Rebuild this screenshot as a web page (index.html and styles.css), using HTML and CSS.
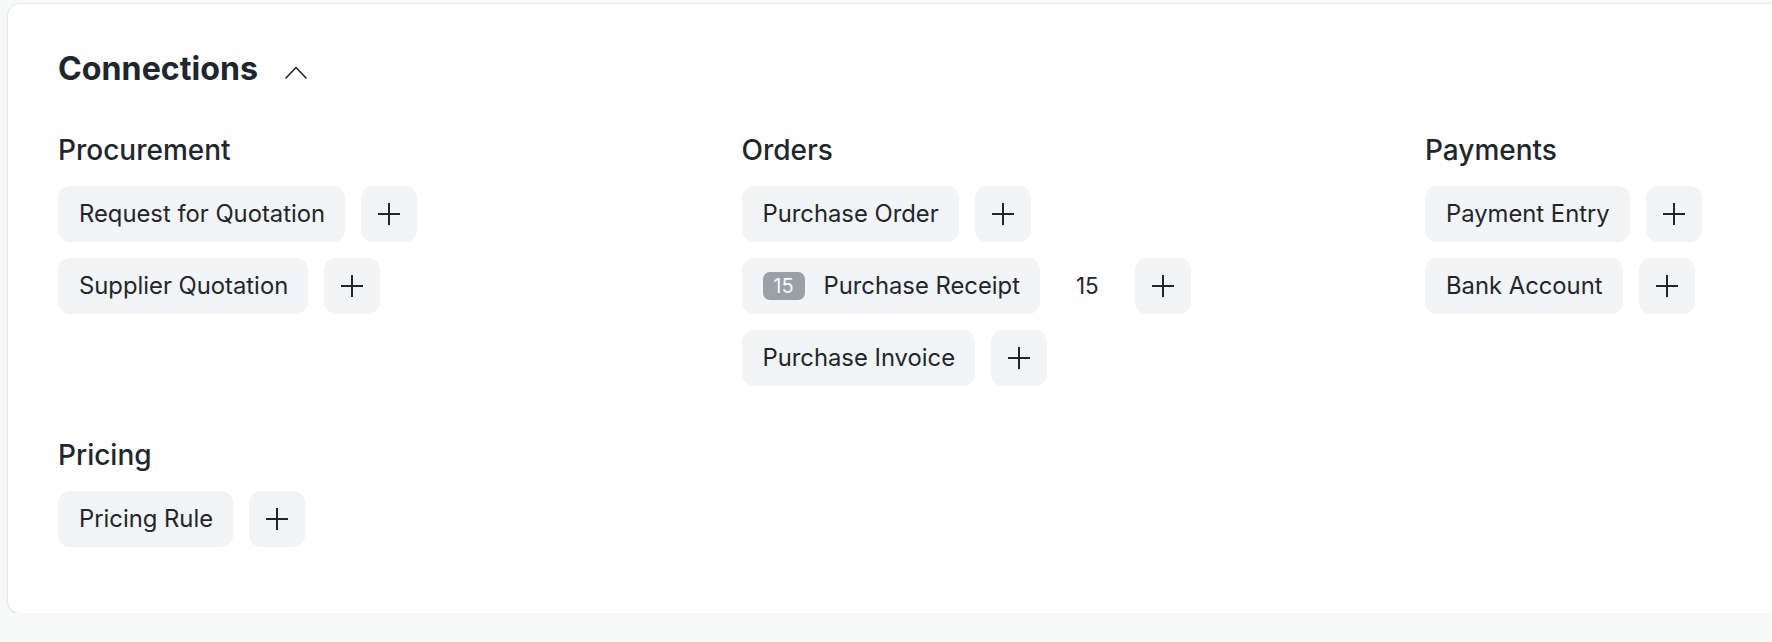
FILE: index.html
```html
<!DOCTYPE html>
<html>
<head>
<meta charset="utf-8">
<link rel="stylesheet" href="styles.css">
</head>
<body>
<div class="card">
  <div class="card-head">
    <h2 class="title">Connections</h2>
    <svg class="chevron" width="22" height="13" viewBox="0 0 22 13"><polyline points="1,12 11,1.5 21,12" fill="none" stroke="#1f272e" stroke-width="1.6" stroke-linejoin="round" stroke-linecap="round"/></svg>
  </div>
  <div class="groups">
    <div class="group">
      <div class="group-title">Procurement</div>
      <div class="links">
        <div class="link-row"><span class="chip">Request for Quotation</span><span class="add"><svg width="22" height="22" viewBox="0 0 22 22"><path d="M11 0V22M0 11H22" stroke="#1f272e" stroke-width="2"/></svg></span></div>
        <div class="link-row"><span class="chip">Supplier Quotation</span><span class="add"><svg width="22" height="22" viewBox="0 0 22 22"><path d="M11 0V22M0 11H22" stroke="#1f272e" stroke-width="2"/></svg></span></div>
      </div>
    </div>
    <div class="group">
      <div class="group-title">Orders</div>
      <div class="links">
        <div class="link-row"><span class="chip">Purchase Order</span><span class="add"><svg width="22" height="22" viewBox="0 0 22 22"><path d="M11 0V22M0 11H22" stroke="#1f272e" stroke-width="2"/></svg></span></div>
        <div class="link-row"><span class="chip"><span class="badge">15</span>Purchase Receipt</span><span class="count">15</span><span class="add"><svg width="22" height="22" viewBox="0 0 22 22"><path d="M11 0V22M0 11H22" stroke="#1f272e" stroke-width="2"/></svg></span></div>
        <div class="link-row"><span class="chip">Purchase Invoice</span><span class="add"><svg width="22" height="22" viewBox="0 0 22 22"><path d="M11 0V22M0 11H22" stroke="#1f272e" stroke-width="2"/></svg></span></div>
      </div>
    </div>
    <div class="group">
      <div class="group-title">Payments</div>
      <div class="links">
        <div class="link-row"><span class="chip">Payment Entry</span><span class="add"><svg width="22" height="22" viewBox="0 0 22 22"><path d="M11 0V22M0 11H22" stroke="#1f272e" stroke-width="2"/></svg></span></div>
        <div class="link-row"><span class="chip">Bank Account</span><span class="add"><svg width="22" height="22" viewBox="0 0 22 22"><path d="M11 0V22M0 11H22" stroke="#1f272e" stroke-width="2"/></svg></span></div>
      </div>
    </div>
    <div class="group">
      <div class="group-title">Pricing</div>
      <div class="links">
        <div class="link-row"><span class="chip">Pricing Rule</span><span class="add"><svg width="22" height="22" viewBox="0 0 22 22"><path d="M11 0V22M0 11H22" stroke="#1f272e" stroke-width="2"/></svg></span></div>
      </div>
    </div>
  </div>
</div>
</body>
</html>
```
FILE: styles.css
```css
html, body {
  overflow: hidden;
}
body {
  margin: 0;
  padding: 4px 0 0 8px;
  background: #f7f8f8;
  font-family: Inter, "Noto Sans", sans-serif;
  color: #1f272e;
}
.card {
  width: 2150px;
  background: #ffffff;
  border-radius: 12px;
  box-shadow: 0 0 0 1px rgba(0,0,0,0.035), 0 1px 3px rgba(0,0,0,0.09);
  padding: 45px 0 66px 50px;
  box-sizing: border-box;
}
.card-head {
  display: flex;
  align-items: center;
  gap: 27px;
  height: 40px;
}
.title {
  margin: 0;
  font-size: 32.2px;
  line-height: 40px;
  font-weight: 700;
}
.chevron {
  display: block;
  margin-top: 6px;
}
.groups {
  margin-top: 43.5px;
  display: grid;
  grid-template-columns: repeat(3, 652px);
  column-gap: 31.5px;
  row-gap: 52px;
}
.group-title {
  font-size: 28px;
  line-height: 34px;
  font-weight: 500;
  margin-bottom: 19px;
}
.links {
  display: flex;
  flex-direction: column;
  gap: 16px;
}
.link-row {
  display: flex;
  align-items: center;
  gap: 16px;
}
.chip {
  display: flex;
  align-items: center;
  height: 56px;
  padding: 0 20px 0 21px;
  background: #f3f4f6;
  border-radius: 12px;
  font-size: 23.8px;
  line-height: 30px;
  box-sizing: border-box;
}
.badge {
  display: inline-flex;
  align-items: center;
  justify-content: center;
  width: 42px;
  height: 28px;
  margin-right: 19px;
  background: #9aa0a7;
  color: #f7f7f7;
  border-radius: 7px;
  font-size: 20px;
  line-height: 28px;
}
.count {
  font-size: 22.4px;
  line-height: 30px;
  padding: 0 20px;
}
.add {
  display: flex;
  align-items: center;
  justify-content: center;
  width: 56px;
  height: 56px;
  background: #f3f4f6;
  border-radius: 12px;
}
.add svg {
  display: block;
}
```
